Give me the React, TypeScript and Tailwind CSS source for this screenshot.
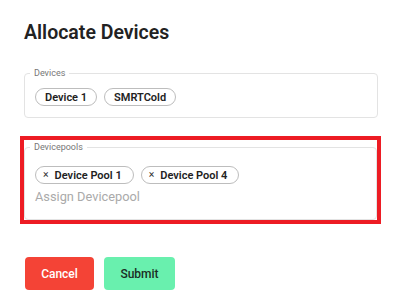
import React from "react";

const font = { fontFamily: "Roboto, 'Noto Sans', sans-serif" };

function Chip({ label, deletable }: { label: string; deletable?: boolean }) {
  return (
    <span
      className={`inline-flex h-[18px] items-center rounded-full border border-[#bdbdbd] text-[11px] font-semibold leading-none text-[#222] ${
        deletable ? "pl-[7px] pr-[11px]" : "px-[9px]"
      }`}
    >
      {deletable && (
        <span className="mr-[6px] text-[10.5px] font-normal text-[#333]">×</span>
      )}
      {label}
    </span>
  );
}

export default function App() {
  return (
    <div className="h-[307px] w-[400px] bg-white pl-[24px] pr-[22px] pt-[21px]" style={font}>
      <h1 className="text-[19.5px] font-semibold leading-[24px] text-[#222]">Allocate Devices</h1>

      <fieldset className="mt-[23px] rounded-[4px] border border-[#e3e3e3] px-[10px] pb-[11px] pt-[10px]">
        <legend className="ml-[-5px] px-[4px] text-[9px] leading-[10px] text-[#777]">Devices</legend>
        <div className="flex gap-[7px]">
          <Chip label="Device 1" />
          <Chip label="SMRTCold" />
        </div>
      </fieldset>

      <div className="ml-[-4px] mr-[-3px] mt-[18px] border-4 border-[#ed1c24] pt-[2px]">
        <fieldset className="rounded-[4px] border border-[#e3e3e3] px-[10px] pb-[14px] pt-[14px]">
          <legend className="ml-[-5px] px-[4px] text-[9px] leading-[10px] text-[#777]">Devicepools</legend>
          <div className="flex gap-[7px]">
            <Chip label="Device Pool 1" deletable />
            <Chip label="Device Pool 4" deletable />
          </div>
          <div className="mt-[5px] text-[12.8px] leading-[16px] text-[#aaa]">Assign Devicepool</div>
        </fieldset>
      </div>

      <div className="ml-px mt-[33px] flex gap-[10px]">
        <button className="h-[33px] w-[69px] rounded-[4px] bg-[#f44336] text-[12px] font-medium text-white">
          Cancel
        </button>
        <button className="h-[33px] w-[71px] rounded-[4px] bg-[#69f0ae] text-[12px] font-medium text-[#1b2e24]">
          Submit
        </button>
      </div>
    </div>
  );
}
